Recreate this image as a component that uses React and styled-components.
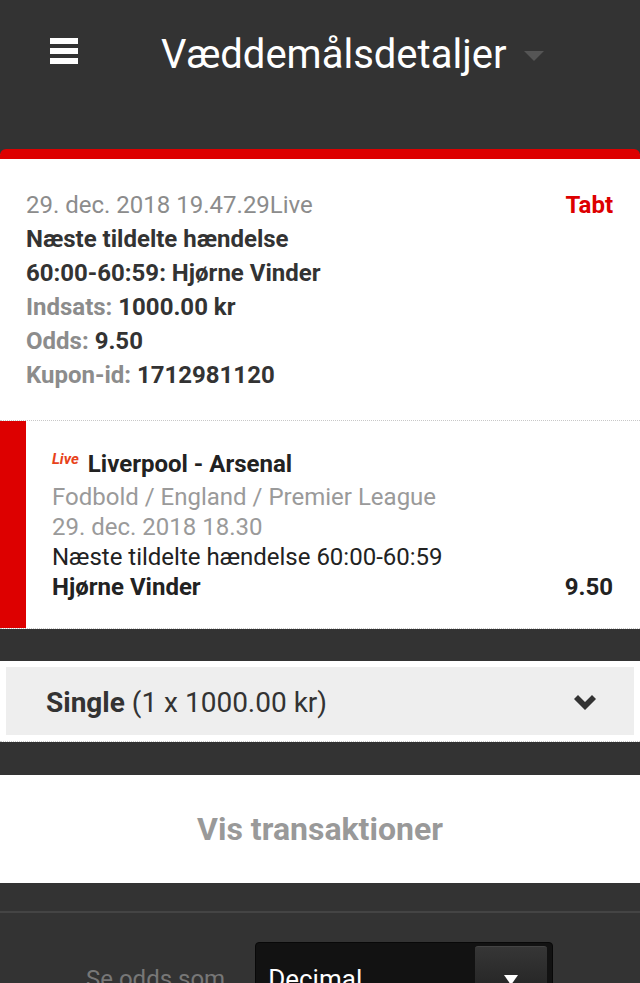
import React from "react";
import styled, { createGlobalStyle } from "styled-components";

const GlobalStyle = createGlobalStyle`
    html, body {
        margin: 0;
        padding: 0;
        background: #333333;
        font-family: Roboto, "Noto Sans", "Liberation Sans", sans-serif;
    }
    * { box-sizing: border-box; }
`;

const bet = {
    placed: "29. dec. 2018 19.47.29",
    market: "Næste tildelte hændelse",
    outcome: "60:00-60:59: Hjørne Vinder",
    stake: "1000.00 kr",
    odds: "9.50",
    coupon: "1712981120",
    status: "Tabt",
};

const selection = {
    event: "Liverpool - Arsenal",
    path: "Fodbold / England / Premier League",
    start: "29. dec. 2018 18.30",
    market: "Næste tildelte hændelse 60:00-60:59",
    pick: "Hjørne Vinder",
    odds: "9.50",
};

function App() {
    return (
        <>
            <GlobalStyle />
            <Page>
                <TopBar>
                    <Burger aria-label="menu">
                        <span /><span /><span />
                    </Burger>
                    <Title>Væddemålsdetaljer</Title>
                    <TitleCaret />
                </TopBar>

                <Card>
                    <Summary>
                        <SummaryHead>
                            <Muted>{bet.placed}Live</Muted>
                            <Status>{bet.status}</Status>
                        </SummaryHead>
                        <Strong>{bet.market}</Strong>
                        <Strong>{bet.outcome}</Strong>
                        <Field><Label>Indsats:</Label> <Strong as="span">{bet.stake}</Strong></Field>
                        <Field><Label>Odds:</Label> <Strong as="span">{bet.odds}</Strong></Field>
                        <Field><Label>Kupon-id:</Label> <Strong as="span">{bet.coupon}</Strong></Field>
                    </Summary>

                    <SelectionRow>
                        <LostMark />
                        <SelectionBody>
                            <EventLine>
                                <LiveTag>Live</LiveTag>
                                <EventName>{selection.event}</EventName>
                            </EventLine>
                            <SubLine>{selection.path}</SubLine>
                            <SubLine>{selection.start}</SubLine>
                            <PlainLine>{selection.market}</PlainLine>
                            <PickLine>
                                <span>{selection.pick}</span>
                                <span>{selection.odds}</span>
                            </PickLine>
                        </SelectionBody>
                    </SelectionRow>
                </Card>

                <Band>
                    <SystemBox>
                        <SystemText><b>Single</b> (1 x 1000.00 kr)</SystemText>
                        <svg width="22" height="16" viewBox="0 0 22 16">
                            <path d="M0 5 L4 1 L11 8 L18 1 L22 5 L11 16 Z" fill="#333" />
                        </svg>
                    </SystemBox>
                </Band>

                <LinkPanel>Vis transaktioner</LinkPanel>

                <Settings>
                    <SettingRow>
                        <SettingLabel>Se odds som</SettingLabel>
                        <Dropdown>
                            <DropdownValue>Decimal</DropdownValue>
                            <DropdownButton>
                                <svg width="14" height="10" viewBox="0 0 14 10">
                                    <path d="M0 0 H14 L7 10 Z" fill="#fff" />
                                </svg>
                            </DropdownButton>
                        </Dropdown>
                    </SettingRow>
                </Settings>
            </Page>
        </>
    );
}

const Page = styled.div`
    width: 640px;
    min-height: 983px;
    background: #333333;
`;

const TopBar = styled.header`
    display: flex;
    align-items: flex-start;
    height: 149px;
    padding-left: 50px;
    color: #fff;
`;

const Burger = styled.div`
    display: flex;
    flex-direction: column;
    gap: 4px;
    margin-top: 38px;
    & > span {
        display: block;
        width: 28px;
        height: 6px;
        background: #fff;
    }
`;

const Title = styled.h1`
    margin: 31px 0 0 83px;
    font-size: 40px;
    line-height: 48px;
    font-weight: 400;
    letter-spacing: 0;
`;

const TitleCaret = styled.span`
    margin: 51px 0 0 18px;
    width: 0;
    height: 0;
    border-left: 10px solid transparent;
    border-right: 10px solid transparent;
    border-top: 10px solid #555;
`;

const Card = styled.section`
    background: #fff;
    border-top: 10px solid #dd0000;
    border-radius: 6px 6px 0 0;
`;

const Summary = styled.div`
    padding: 29px 27px 28px 26px;
    border-bottom: 1px dotted #c8c8c8;
    font-size: 24px;
    line-height: 34px;
`;

const SummaryHead = styled.div`
    display: flex;
    justify-content: space-between;
`;

const Muted = styled.span`
    color: #8c8c8c;
`;

const Status = styled.span`
    color: #dd0000;
    font-weight: 700;
`;

const Strong = styled.div`
    color: #333;
    font-weight: 700;
`;

const Field = styled.div``;

const Label = styled.span`
    color: #8c8c8c;
    font-weight: 700;
`;

const SelectionRow = styled.div`
    display: flex;
    border-bottom: 1px dotted #c8c8c8;
`;

const LostMark = styled.div`
    width: 26px;
    flex: none;
    background: #dd0000;
`;

const SelectionBody = styled.div`
    flex: 1;
    padding: 25px 27px 26px 26px;
    font-size: 24px;
    line-height: 30px;
`;

const EventLine = styled.div`
    display: flex;
    align-items: flex-start;
    gap: 9px;
    line-height: 36px;
`;

const LiveTag = styled.span`
    color: #e8421a;
    font-size: 15px;
    line-height: 15px;
    font-style: italic;
    font-weight: 700;
    margin-top: 6px;
`;

const EventName = styled.span`
    color: #222;
    font-size: 24px;
    font-weight: 700;
`;

const SubLine = styled.div`
    color: #9a9a9a;
`;

const PlainLine = styled.div`
    color: #222;
`;

const PickLine = styled.div`
    display: flex;
    justify-content: space-between;
    color: #222;
    font-weight: 700;
`;

const Band = styled.div`
    margin-top: 32px;
    background: #fff;
    padding: 6px;
    border-bottom: 1px dotted #c8c8c8;
`;

const SystemBox = styled.div`
    display: flex;
    align-items: center;
    justify-content: space-between;
    height: 68px;
    padding: 2px 38px 0 40px;
    background: #eeeeee;
`;

const SystemText = styled.span`
    color: #333;
    font-size: 28px;
    & > b { font-weight: 700; }
`;

const LinkPanel = styled.div`
    margin-top: 33px;
    height: 108px;
    display: flex;
    align-items: center;
    justify-content: center;
    background: #fff;
    color: #999;
    font-size: 32px;
    font-weight: 700;
`;

const Settings = styled.div`
    margin-top: 28px;
    border-top: 2px solid #444;
    padding-top: 29px;
`;

const SettingRow = styled.div`
    display: flex;
    align-items: center;
    gap: 30px;
    padding-left: 86px;
`;

const SettingLabel = styled.span`
    color: #777;
    font-size: 24px;
`;

const Dropdown = styled.div`
    display: flex;
    justify-content: space-between;
    width: 298px;
    height: 74px;
    padding: 3px 5px 3px 12px;
    background: #121212;
    border: 1px solid #080808;
    border-radius: 4px;
`;

const DropdownValue = styled.span`
    align-self: center;
    color: #fff;
    font-size: 26px;
`;

const DropdownButton = styled.div`
    display: flex;
    align-items: center;
    justify-content: center;
    width: 72px;
    border-radius: 3px;
    background: linear-gradient(#363636, #1c1c1c);
    border-top: 1px solid #444;
`;

export default App;
